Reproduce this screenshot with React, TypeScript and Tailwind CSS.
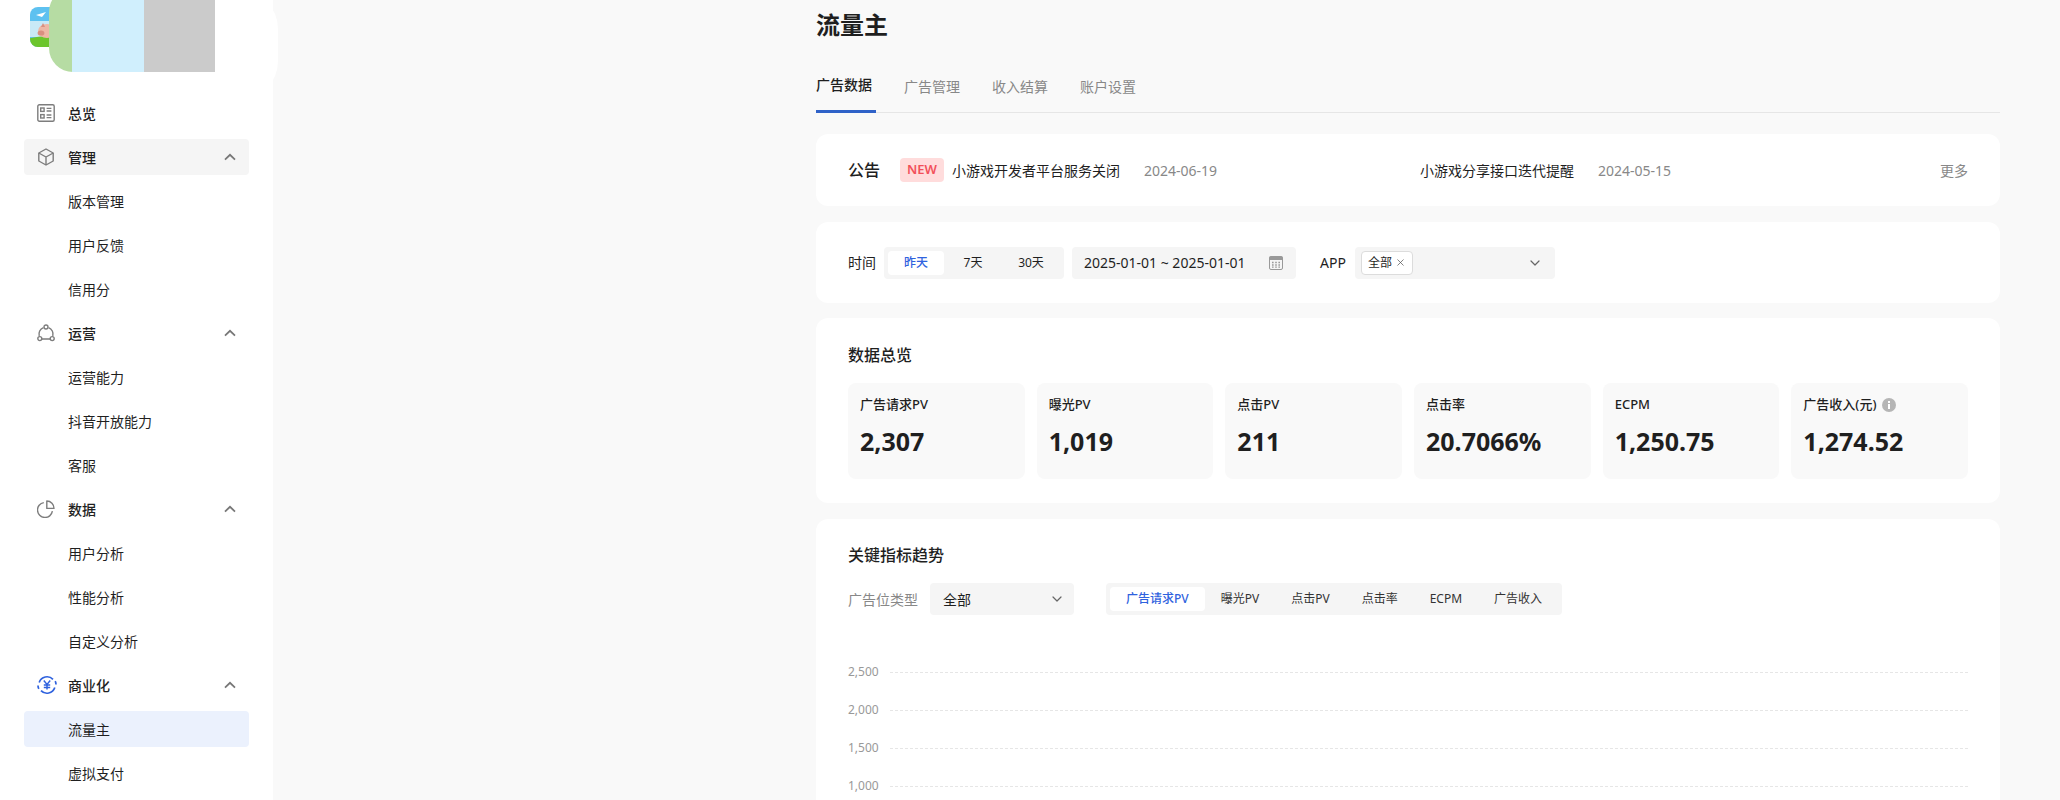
import { ChevronDown, X } from 'lucide-react';

const FONT = '[font-family:"Noto_Sans","Noto_Sans_CJK_SC",sans-serif]';

function OverviewIcon() {
  return (
    <svg width="18" height="18" viewBox="0 0 18 18" fill="none" stroke="#7d7d7d" strokeWidth="1.4">
      <rect x="0.8" y="0.8" width="16.4" height="16.4" rx="1.5" />
      <rect x="3.7" y="4" width="3.4" height="3.4" />
      <rect x="3.7" y="10.6" width="3.4" height="3.4" />
      <path d="M9.6 4.4h4.8M9.6 7h4.8M9.6 11h4.8M9.6 13.6h4.8" />
    </svg>
  );
}

function CubeIcon() {
  return (
    <svg width="18" height="18" viewBox="0 0 18 18" fill="none" stroke="#7d7d7d" strokeWidth="1.4" strokeLinejoin="round">
      <path d="M9 1 16.2 5v8L9 17l-7.2-4V5z" />
      <path d="M1.8 5 9 9l7.2-4M9 9v8" />
    </svg>
  );
}

function OperateIcon() {
  return (
    <svg width="18" height="18" viewBox="0 0 18 18" fill="none" stroke="#7d7d7d" strokeWidth="1.4">
      <path d="M6.4 3.6A7 7 0 0 0 2.2 12M11.6 3.6A7 7 0 0 1 15.8 12M4.6 15h8.8" />
      <circle cx="9" cy="3" r="2" />
      <circle cx="2.8" cy="14.6" r="2" />
      <circle cx="15.2" cy="14.6" r="2" />
    </svg>
  );
}

function PieIcon() {
  return (
    <svg width="18" height="18" viewBox="0 0 18 18" fill="none" stroke="#7d7d7d" strokeWidth="1.4">
      <path d="M6.8 2.6a7.5 7.5 0 1 0 8.6 8.6" />
      <path d="M9.8 1a7.2 7.2 0 0 1 7.2 7.4H9.8z" strokeLinejoin="round" />
    </svg>
  );
}

function YenIcon() {
  return (
    <svg width="20" height="20" viewBox="0 0 20 20" fill="none" stroke="#2f62de" strokeWidth="1.7">
      <path d="M2.2 7.4A8.2 8.2 0 0 1 16 4.4M17.8 12.6A8.2 8.2 0 0 1 4 15.6M1 10.5c0 1.2.3 2.4.8 3.4M19 9.5c0-1.2-.3-2.4-.8-3.4" />
      <path d="M6.8 5.6 10 9.4l3.2-3.8M6.8 10h6.4M6.8 12.6h6.4M10 9.4v5.2" strokeWidth="1.5" />
    </svg>
  );
}

function ChevronUp() {
  return (
    <svg width="12" height="8" viewBox="0 0 12 8" fill="none" stroke="#777" strokeWidth="1.8">
      <path d="M1 6.6 6 1.8l5 4.8" />
    </svg>
  );
}

function CalendarIcon() {
  return (
    <svg width="14" height="14" viewBox="0 0 14 14">
      <rect x="0.5" y="0.5" width="13" height="13" rx="1.5" fill="none" stroke="#999" />
      <rect x="0.5" y="0.5" width="13" height="3.5" fill="#999" />
      <path d="M3 6.5h1.6M6.2 6.5h1.6M9.4 6.5H11M3 9h1.6M6.2 9h1.6M9.4 9H11M3 11.2h1.6M6.2 11.2h1.6M9.4 11.2H11" stroke="#999" strokeWidth="1.3" />
    </svg>
  );
}

function InfoIcon() {
  return (
    <svg width="14" height="14" viewBox="0 0 14 14">
      <circle cx="7" cy="7" r="7" fill="#b5b5b5" />
      <rect x="6" y="6" width="2" height="5" fill="#fff" />
      <rect x="6" y="3" width="2" height="2" fill="#fff" />
    </svg>
  );
}

function PigLogo() {
  return (
    <svg width="40" height="40" viewBox="0 0 40 40" className="rounded-lg">
      <rect width="40" height="40" fill="#5ec1f0" />
      <rect y="14" width="40" height="16" fill="#c9e9f7" />
      <path d="M6 8 16 5 12 10z" fill="#fff" />
      <ellipse cx="20" cy="38" rx="30" ry="9" fill="#6cc52c" />
      <ellipse cx="17" cy="24" rx="9" ry="7" fill="#eeb7a5" />
      <ellipse cx="11" cy="26" rx="3.4" ry="2.6" fill="#d98f80" />
      <path d="M13 16l2 4-4 0z" fill="#d98f80" />
    </svg>
  );
}

const navItems = [
  { label: '总览', icon: <OverviewIcon />, strong: true },
  { label: '管理', icon: <CubeIcon />, strong: true, chevron: true, bg: 'bg-[#f5f5f5]' },
  { label: '版本管理' },
  { label: '用户反馈' },
  { label: '信用分' },
  { label: '运营', icon: <OperateIcon />, strong: true, chevron: true },
  { label: '运营能力' },
  { label: '抖音开放能力' },
  { label: '客服' },
  { label: '数据', icon: <PieIcon />, strong: true, chevron: true },
  { label: '用户分析' },
  { label: '性能分析' },
  { label: '自定义分析' },
  { label: '商业化', icon: <YenIcon />, strong: true, chevron: true },
  { label: '流量主', bg: 'bg-[#ebf1fd]' },
  { label: '虚拟支付' },
];

const metrics = [
  { label: '广告请求PV', value: '2,307' },
  { label: '曝光PV', value: '1,019' },
  { label: '点击PV', value: '211' },
  { label: '点击率', value: '20.7066%' },
  { label: 'ECPM', value: '1,250.75' },
  { label: '广告收入(元)', value: '1,274.52', info: true },
];

function Sidebar() {
  return (
    <aside className="relative w-[273px] shrink-0 bg-white">
      <div className="relative h-[91px]">
        <div className="absolute left-[30px] top-[7px]">
          <PigLogo />
        </div>
        <div className="absolute left-[200px] top-[-10px] h-[110px] w-[78px] rounded-full bg-white" />
        <div className="absolute left-[49px] top-[-12px] h-[84px] w-[24px] rounded-l-[24px] bg-[#b6dca3]" />
        <div className="absolute left-[72px] top-0 h-[72px] w-[72px] bg-[#d0effd]" />
        <div className="absolute left-[144px] top-0 h-[72px] w-[71px] bg-[#cbcbcb]" />
      </div>
      {navItems.map((item) => (
        <div key={item.label} className="flex h-[44px] items-center">
          <div className={`mx-[24px] flex h-[36px] w-[225px] items-center rounded-[4px] pl-[13px] pr-[13px] ${item.bg ?? ''}`}>
            <span className="flex w-[31px] shrink-0 items-center">{item.icon}</span>
            <span className={`text-[14px] text-[#1f1f1f] ${item.strong ? 'font-medium' : ''}`}>{item.label}</span>
            {item.chevron && (
              <span className="ml-auto flex">
                <ChevronUp />
              </span>
            )}
          </div>
        </div>
      ))}
    </aside>
  );
}

function Tabs() {
  const tabs = ['广告数据', '广告管理', '收入结算', '账户设置'];
  return (
    <div className="mt-[21px] flex h-[51px] gap-[28px] border-b border-[#e6e6e6]">
      {tabs.map((tab, i) => (
        <div
          key={tab}
          className={`relative flex h-[51px] w-[60px] items-center pb-[3px] text-[14px] ${
            i === 0 ? 'border-b-[3px] border-[#2f62c8] font-medium text-[#1f1f1f]' : 'text-[#888]'
          }`}
        >
          {tab}
        </div>
      ))}
    </div>
  );
}

function Notice() {
  return (
    <div className="mt-[21px] flex h-[72px] items-center rounded-[12px] bg-white px-[32px] text-[14px]">
      <span className="w-[52px] text-[16px] font-medium text-[#1f1f1f]">公告</span>
      <span className="flex h-[24px] w-[44px] items-center justify-center rounded-[4px] bg-[#ffdcdc] text-[13px] font-semibold text-[#f2505a]">NEW</span>
      <span className="ml-[8px] w-[168px] text-[#1f1f1f]">小游戏开发者平台服务关闭</span>
      <span className="ml-[24px] w-[276px] text-[#888]">2024-06-19</span>
      <span className="w-[154px] text-[#1f1f1f]">小游戏分享接口迭代提醒</span>
      <span className="ml-[24px] text-[#888]">2024-05-15</span>
      <span className="ml-auto text-[#888]">更多</span>
    </div>
  );
}

function Filters() {
  return (
    <div className="mt-[16px] flex h-[81px] items-center rounded-[12px] bg-white px-[32px] text-[14px] text-[#1f1f1f]">
      <span className="w-[36px]">时间</span>
      <div className="flex h-[32px] w-[180px] items-center rounded-[4px] bg-[#f5f5f5] px-[4px] text-[12px]">
        <span className="flex h-[24px] w-[56px] items-center justify-center rounded-[4px] bg-white font-medium text-[#2f62de]">昨天</span>
        <span className="flex h-[24px] w-[58px] items-center justify-center">7天</span>
        <span className="flex h-[24px] w-[58px] items-center justify-center">30天</span>
      </div>
      <div className="ml-[8px] flex h-[32px] w-[224px] items-center justify-between rounded-[4px] bg-[#f5f5f5] pl-[12px] pr-[13px]">
        <span>2025-01-01 ~ 2025-01-01</span>
        <CalendarIcon />
      </div>
      <span className="ml-[24px] w-[35px]">APP</span>
      <div className="flex h-[32px] w-[200px] items-center justify-between rounded-[4px] bg-[#f5f5f5] pl-[6px] pr-[12px]">
        <span className="flex h-[24px] w-[52px] items-center justify-center gap-[3px] rounded-[4px] border border-[#dcdcdc] bg-white text-[12px]">
          全部
          <X size={11} strokeWidth={1.6} color="#555" />
        </span>
        <ChevronDown size={16} color="#666" strokeWidth={1.8} />
      </div>
    </div>
  );
}

function Overview() {
  return (
    <div className="mt-[15px] h-[185px] rounded-[12px] bg-white px-[32px] pt-[25px]">
      <div className="text-[16px] font-medium leading-[24px] text-[#1f1f1f]">数据总览</div>
      <div className="mt-[16px] grid grid-cols-6 gap-[12px]">
        {metrics.map((m) => (
          <div key={m.label} className="h-[96px] rounded-[8px] bg-[#f9f9f9] px-[12px] pt-[12px]">
            <div className="flex h-[20px] items-center gap-[6px] text-[13px] font-medium text-[#1f1f1f]">
              {m.label}
              {m.info && <InfoIcon />}
            </div>
            <div className="mt-[8px] text-[25px] font-bold leading-[36px] text-[#1f1f1f]">{m.value}</div>
          </div>
        ))}
      </div>
    </div>
  );
}

function Trend() {
  const tabs = ['广告请求PV', '曝光PV', '点击PV', '点击率', 'ECPM', '广告收入'];
  const ticks = ['2,500', '2,000', '1,500', '1,000'];
  return (
    <div className="mt-[16px] h-[400px] rounded-[12px] bg-white px-[32px] pt-[24px]">
      <div className="text-[16px] font-medium leading-[24px] text-[#1f1f1f]">关键指标趋势</div>
      <div className="mt-[16px] flex items-center">
        <span className="w-[82px] text-[14px] text-[#888]">广告位类型</span>
        <div className="flex h-[32px] w-[144px] items-center justify-between rounded-[4px] bg-[#f5f5f5] pl-[13px] pr-[9px] text-[14px] text-[#1f1f1f]">
          全部
          <ChevronDown size={16} color="#666" strokeWidth={1.8} />
        </div>
        <div className="ml-[32px] flex h-[32px] items-center rounded-[4px] bg-[#f5f5f5] px-[4px] text-[12px] text-[#333]">
          {tabs.map((tab, i) => (
            <span
              key={tab}
              className={`flex h-[24px] items-center rounded-[4px] px-[16px] ${
                i === 0 ? 'bg-white font-medium text-[#2f62de]' : ''
              }`}
            >
              {tab}
            </span>
          ))}
        </div>
      </div>
      <div className="mt-[38px]">
        {ticks.map((tick) => (
          <div key={tick} className="flex h-[38px] items-center">
            <span className="w-[42px] shrink-0 text-[12px] text-[#999]">{tick}</span>
            <div className="flex-1 border-t border-dashed border-[#e6e6e6]" />
          </div>
        ))}
      </div>
    </div>
  );
}

export default function App() {
  return (
    <div className={`flex h-[800px] overflow-hidden bg-[#f9f9f9] ${FONT}`}>
      <Sidebar />
      <main className="min-w-0 flex-1 pl-[543px] pr-[60px] pt-[9px]">
        <h1 className="text-[24px] font-bold leading-[32px] text-[#1f1f1f]">流量主</h1>
        <Tabs />
        <Notice />
        <Filters />
        <Overview />
        <Trend />
      </main>
    </div>
  );
}
